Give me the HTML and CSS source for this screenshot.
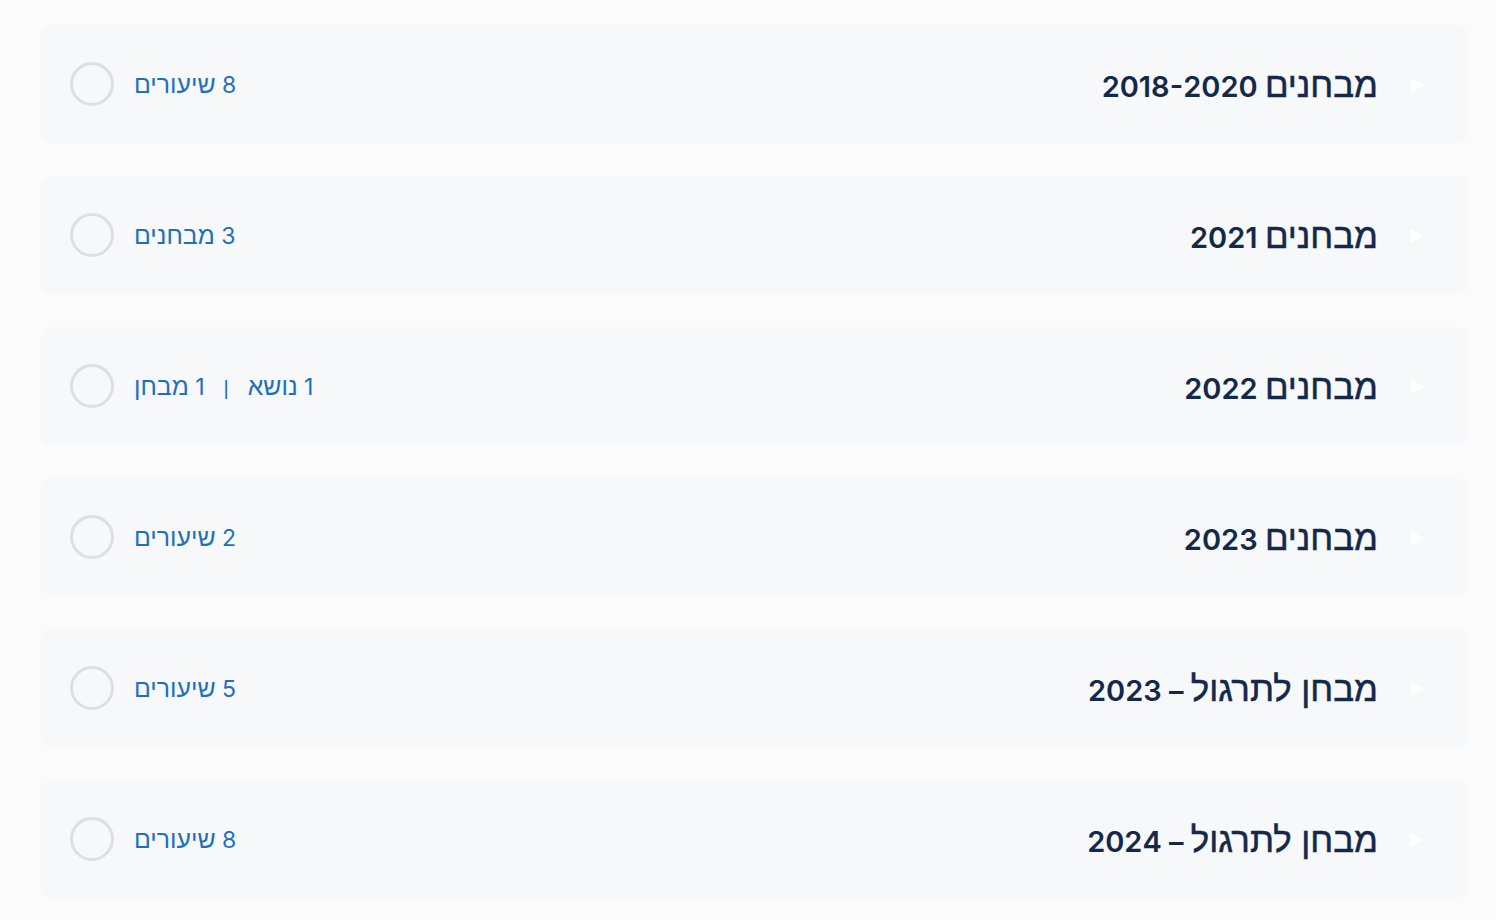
FILE: index.html
```html
<!DOCTYPE html>
<html lang="he" dir="rtl">
<head>
<meta charset="utf-8">
<link rel="stylesheet" href="styles.css">
</head>
<body>
<div class="list">
  <div class="card">
    <span class="arrow"></span>
    <span class="title"><span class="he">מבחנים</span> 2018-2020</span>
    <span class="spacer"></span>
    <span class="meta">8 <span class="he">שיעורים</span></span>
    <span class="check"></span>
  </div>
  <div class="card">
    <span class="arrow"></span>
    <span class="title"><span class="he">מבחנים</span> 2021</span>
    <span class="spacer"></span>
    <span class="meta">3 <span class="he">מבחנים</span></span>
    <span class="check"></span>
  </div>
  <div class="card">
    <span class="arrow"></span>
    <span class="title"><span class="he">מבחנים</span> 2022</span>
    <span class="spacer"></span>
    <span class="meta">1 <span class="he">נושא</span><span class="sep">|</span>1 <span class="he">מבחן</span></span>
    <span class="check"></span>
  </div>
  <div class="card">
    <span class="arrow"></span>
    <span class="title"><span class="he">מבחנים</span> 2023</span>
    <span class="spacer"></span>
    <span class="meta">2 <span class="he">שיעורים</span></span>
    <span class="check"></span>
  </div>
  <div class="card">
    <span class="arrow"></span>
    <span class="title"><span class="he">מבחן לתרגול</span> – 2023</span>
    <span class="spacer"></span>
    <span class="meta">5 <span class="he">שיעורים</span></span>
    <span class="check"></span>
  </div>
  <div class="card">
    <span class="arrow"></span>
    <span class="title"><span class="he">מבחן לתרגול</span> – 2024</span>
    <span class="spacer"></span>
    <span class="meta">8 <span class="he">שיעורים</span></span>
    <span class="check"></span>
  </div>
</div>
</body>
</html>
```
FILE: styles.css
```css
html, body {
  margin: 0;
  padding: 0;
  background: #fbfbfc;
  font-family: Inter, "Liberation Sans", sans-serif;
}
.list {
  direction: rtl;
  display: flex;
  flex-direction: column;
  gap: 33px;
  padding: 25px 28px 22px 40px;
}
.card {
  display: flex;
  align-items: center;
  height: 118px;
  box-sizing: border-box;
  padding: 2px 44px 0 30px;
  background: #f7f8fa;
  border-radius: 12px;
}
.arrow {
  width: 0;
  height: 0;
  border-top: 7px solid transparent;
  border-bottom: 7px solid transparent;
  border-left: 13px solid #ffffff;
  margin-left: 33px;
}
.title {
  font-size: 29px;
  font-weight: 600;
  line-height: 1;
  color: #14294a;
}
.he {
  font-family: "Liberation Sans", sans-serif;
  font-weight: 400;
  font-size: 1.2em;
  line-height: 1;
}
.title .he {
  -webkit-text-stroke: 0.5px #14294a;
}
.spacer {
  flex: 1;
}
.meta {
  font-size: 23px;
  line-height: 1;
  color: #1f6fbf;
  margin-left: 20px;
}
.meta .he {
  font-size: 1.08em;
}
.sep {
  font-family: "Liberation Sans", sans-serif;
  font-size: 20px;
  margin: 0 19px;
}
.check {
  width: 44px;
  height: 44px;
  box-sizing: border-box;
  border: 3px solid #dedfe2;
  border-radius: 50%;
  margin-top: -2px;
}
```
